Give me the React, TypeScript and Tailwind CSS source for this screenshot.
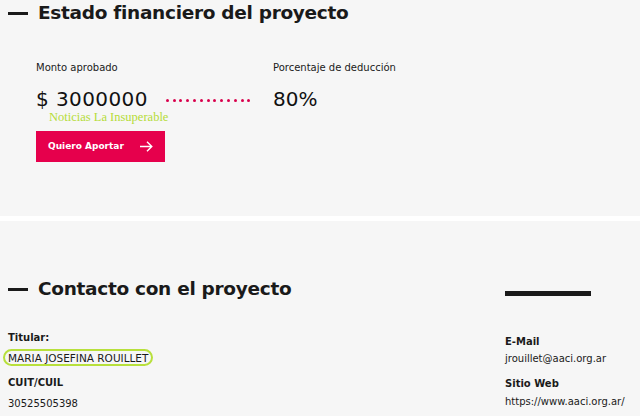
import React from 'react'

const font = { fontFamily: '"DejaVu Sans", "Noto Sans", sans-serif' }

const SectionTitle = ({ title }: { title: string }) => (
  <div className="flex items-center">
    <span className="block w-[20px] h-[3px] bg-[#1a1a1a] ml-[8px] mr-[10px]" />
    <h2 className="text-[18.5px] leading-[24px] font-bold text-[#1a1a1a] tracking-[-0.3px]">
      {title}
    </h2>
  </div>
)

export default function App() {
  return (
    <div className="w-[640px] h-[416px] overflow-hidden bg-[#f6f6f6]" style={font}>
      {/* Estado financiero */}
      <section className="h-[216px] pt-[1px]">
        <SectionTitle title="Estado financiero del proyecto" />
        <div className="pl-[36px] mt-[36px] flex">
          <div className="w-[237px]">
            <p className="text-[10px] leading-[14px] text-[#1a1a1a]">Monto aprobado</p>
            <div className="flex items-center mt-[11px]">
              <p className="text-[20px] leading-[26px] font-medium text-[#111] tracking-[0.4px]">$ 3000000</p>
              <div className="ml-[18px] flex gap-[3.8px] mt-[2px]">
                {Array.from({ length: 13 }, (_, i) => (
                  <span key={i} className="block w-[3px] h-[3px] rounded-full bg-[#d9004c]" />
                ))}
              </div>
            </div>
            <p
              className="ml-[13px] -mt-[2px] text-[12.5px] leading-[14px] text-[#b5dc38]"
              style={{ fontFamily: '"Liberation Serif", serif' }}
            >
              Noticias La Insuperable
            </p>
          </div>
          <div>
            <p className="text-[10px] leading-[14px] text-[#1a1a1a]">Porcentaje de deducción</p>
            <p className="mt-[11px] text-[20px] leading-[26px] font-medium text-[#111]">80%</p>
          </div>
        </div>
        <button className="ml-[36px] mt-[7px] w-[129px] h-[31px] bg-[#e6004c] text-white flex items-center justify-between pl-[12px] pr-[12px]">
          <span className="text-[9px] font-bold">Quiero Aportar</span>
          <svg width="13" height="11" viewBox="0 0 13 11" fill="none" stroke="white" strokeWidth="1.4">
            <path d="M0 5.5h12M7 0.8l4.8 4.7L7 10.2" />
          </svg>
        </button>
      </section>

      <div className="h-[5px] bg-white" />

      {/* Contacto */}
      <section className="pt-[56px] flex">
        <div className="flex-1">
          <SectionTitle title="Contacto con el proyecto" />
          <div className="pl-[8px] mt-[30px] text-[#1a1a1a]">
            <p className="text-[10px] leading-[14px] font-bold">Titular:</p>
            <div className="mt-[4px] -ml-[5px] inline-block rounded-full border-[2.5px] border-[#b8e03c] px-[3px] leading-[11px]">
              <span className="text-[10.5px] uppercase">MARIA JOSEFINA ROUILLET</span>
            </div>
            <p className="mt-[7px] text-[10px] leading-[14px] font-bold">CUIT/CUIL</p>
            <p className="mt-[7px] text-[10px] leading-[14px]">30525505398</p>
          </div>
        </div>
        <div className="w-[135px] pt-[14px] text-[#1a1a1a]">
          <span className="block w-[86px] h-[5px] bg-[#1a1a1a]" />
          <p className="mt-[39px] text-[10px] leading-[14px] font-bold">E-Mail</p>
          <p className="mt-[3px] text-[10px] leading-[14px]">jrouillet@aaci.org.ar</p>
          <p className="mt-[11px] text-[10px] leading-[14px] font-bold">Sitio Web</p>
          <p className="mt-[4px] text-[10px] leading-[14px]">https://www.aaci.org.ar/</p>
        </div>
      </section>
    </div>
  )
}
